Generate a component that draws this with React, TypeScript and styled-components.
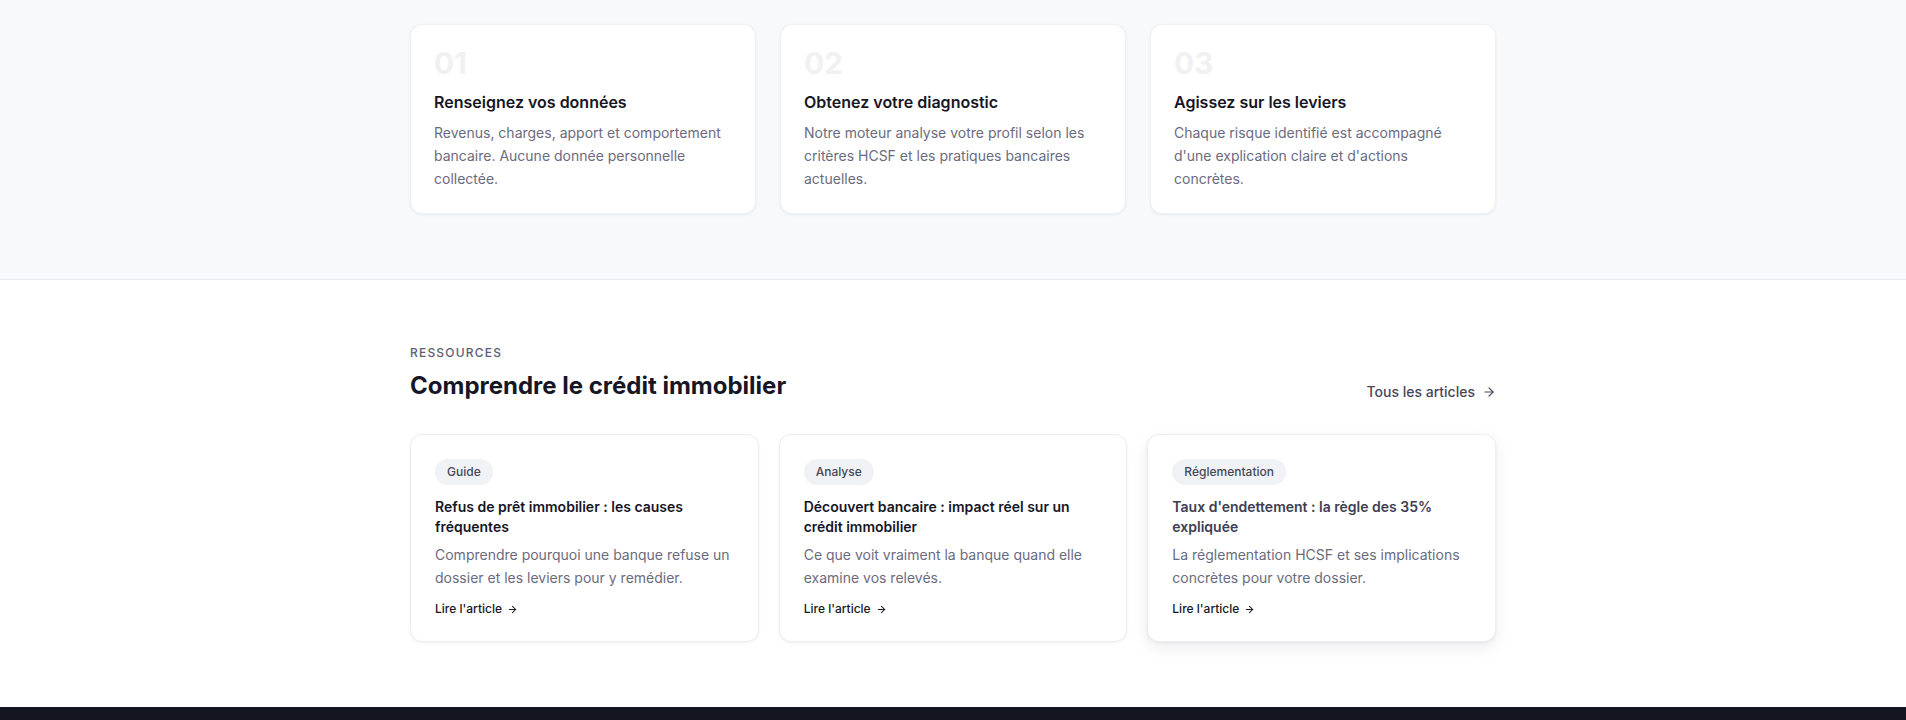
import React from "react";
import styled, { createGlobalStyle, css } from "styled-components";
import { ArrowRight } from "lucide-react";

const GlobalStyle = createGlobalStyle`
  *, *::before, *::after { box-sizing: border-box; }
  html, body { margin: 0; padding: 0; }
  body {
    font-family: Inter, "Noto Sans", "Liberation Sans", sans-serif;
    background: #ffffff;
    color: #161625;
    -webkit-font-smoothing: antialiased;
  }
`;

const Container = styled.div`
  width: 1086px;
  margin: 0 auto;
`;

const StepsSection = styled.section`
  background: #f8f9fb;
  border-bottom: 1px solid #e8eaef;
  padding: 24px 0 65px;
`;

const StepsGrid = styled.div`
  display: grid;
  grid-template-columns: repeat(3, 1fr);
  gap: 24px;
`;

const StepCard = styled.div`
  background: #ffffff;
  border: 1px solid #eef0f3;
  border-radius: 12px;
  padding: 23px;
  box-shadow: 0 1px 3px rgba(20, 20, 40, 0.06);
`;

const StepNumber = styled.div`
  font-size: 30px;
  font-weight: 700;
  line-height: 30px;
  color: #f1f1f4;
  letter-spacing: -0.01em;
`;

const StepTitle = styled.h3`
  margin: 12px 0 0;
  font-size: 16px;
  font-weight: 600;
  line-height: 24px;
  color: #161625;
`;

const StepText = styled.p`
  margin: 7px 0 0;
  font-size: 14px;
  line-height: 23px;
  color: #6b6b80;
`;

const ResourcesSection = styled.section`
  padding: 65px 0 65px;
  background: #ffffff;
`;

const Header = styled.div`
  display: flex;
  justify-content: space-between;
  align-items: flex-end;
  margin-bottom: 34px;
`;

const Eyebrow = styled.div`
  font-size: 12px;
  line-height: 16px;
  font-weight: 500;
  letter-spacing: 0.1em;
  text-transform: uppercase;
  color: #5e5e72;
`;

const Heading = styled.h2`
  margin: 10px 0 0;
  font-size: 24px;
  line-height: 29px;
  font-weight: 700;
  color: #161625;
`;

const AllLink = styled.a`
  display: inline-flex;
  align-items: center;
  gap: 7px;
  font-size: 14px;
  line-height: 20px;
  font-weight: 500;
  color: #474759;
  text-decoration: none;
  margin-bottom: -2px;
`;

const ArticlesGrid = styled.div`
  display: grid;
  grid-template-columns: repeat(3, 1fr);
  gap: 20px;
`;

const ArticleCard = styled.a<{ $hovered?: boolean }>`
  display: flex;
  flex-direction: column;
  align-items: flex-start;
  background: #ffffff;
  border: 1px solid #eceef2;
  border-radius: 12px;
  padding: 24px;
  text-decoration: none;
  box-shadow: 0 1px 3px rgba(20, 20, 40, 0.06);
  ${(p) =>
    p.$hovered &&
    css`
      box-shadow: 0 6px 16px rgba(20, 20, 40, 0.08), 0 1px 3px rgba(20, 20, 40, 0.06);
    `}
`;

const Tag = styled.span`
  display: inline-block;
  padding: 5px 12px;
  font-size: 12px;
  line-height: 16px;
  font-weight: 500;
  color: #474759;
  background: #f1f2f5;
  border-radius: 999px;
`;

const ArticleTitle = styled.h3<{ $hovered?: boolean }>`
  margin: 12px 0 0;
  font-size: 14px;
  line-height: 20px;
  font-weight: 600;
  color: ${(p) => (p.$hovered ? "#3e3e52" : "#161625")};
`;

const ArticleText = styled.p`
  margin: 6px 0 0;
  font-size: 14px;
  line-height: 23px;
  color: #6b6b80;
`;

const ReadMore = styled.span`
  display: inline-flex;
  align-items: center;
  gap: 5px;
  margin-top: 12px;
  font-size: 12px;
  line-height: 16px;
  font-weight: 500;
  color: #161625;
`;

const Footer = styled.footer`
  background: #151522;
  height: 200px;
`;

const steps = [
  {
    n: "01",
    title: "Renseignez vos données",
    text: "Revenus, charges, apport et comportement bancaire. Aucune donnée personnelle collectée.",
  },
  {
    n: "02",
    title: "Obtenez votre diagnostic",
    text: "Notre moteur analyse votre profil selon les critères HCSF et les pratiques bancaires actuelles.",
  },
  {
    n: "03",
    title: "Agissez sur les leviers",
    text: "Chaque risque identifié est accompagné d'une explication claire et d'actions concrètes.",
  },
];

const articles = [
  {
    tag: "Guide",
    title: "Refus de prêt immobilier : les causes fréquentes",
    text: "Comprendre pourquoi une banque refuse un dossier et les leviers pour y remédier.",
  },
  {
    tag: "Analyse",
    title: "Découvert bancaire : impact réel sur un crédit immobilier",
    text: "Ce que voit vraiment la banque quand elle examine vos relevés.",
  },
  {
    tag: "Réglementation",
    title: "Taux d'endettement : la règle des 35% expliquée",
    text: "La réglementation HCSF et ses implications concrètes pour votre dossier.",
    hovered: true,
  },
];

export default function App() {
  return (
    <>
      <GlobalStyle />
      <StepsSection>
        <Container>
          <StepsGrid>
            {steps.map((s) => (
              <StepCard key={s.n}>
                <StepNumber>{s.n}</StepNumber>
                <StepTitle>{s.title}</StepTitle>
                <StepText>{s.text}</StepText>
              </StepCard>
            ))}
          </StepsGrid>
        </Container>
      </StepsSection>
      <ResourcesSection>
        <Container>
          <Header>
            <div>
              <Eyebrow>Ressources</Eyebrow>
              <Heading>Comprendre le crédit immobilier</Heading>
            </div>
            <AllLink href="#">
              Tous les articles <ArrowRight size={14} strokeWidth={2} />
            </AllLink>
          </Header>
          <ArticlesGrid>
            {articles.map((a) => (
              <ArticleCard key={a.tag} href="#" $hovered={a.hovered}>
                <Tag>{a.tag}</Tag>
                <ArticleTitle $hovered={a.hovered}>{a.title}</ArticleTitle>
                <ArticleText>{a.text}</ArticleText>
                <ReadMore>
                  Lire l'article <ArrowRight size={11} strokeWidth={2.2} />
                </ReadMore>
              </ArticleCard>
            ))}
          </ArticlesGrid>
        </Container>
      </ResourcesSection>
      <Footer />
    </>
  );
}
